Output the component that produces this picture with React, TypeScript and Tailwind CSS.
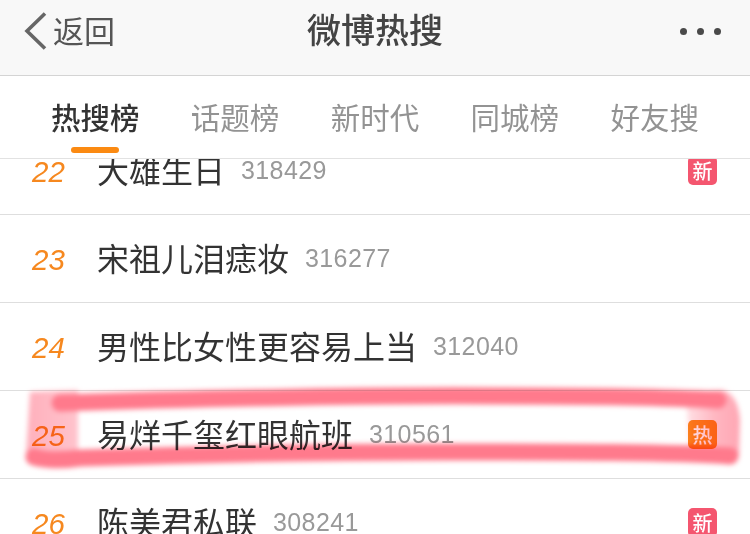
const tabs = ['热搜榜', '话题榜', '新时代', '同城榜', '好友搜'];

const rows = [
  { rank: 22, title: '大雄生日', count: '318429', badge: '新' },
  { rank: 23, title: '宋祖儿泪痣妆', count: '316277' },
  { rank: 24, title: '男性比女性更容易上当', count: '312040' },
  { rank: 25, title: '易烊千玺红眼航班', count: '310561', badge: '热' },
  { rank: 26, title: '陈美君私联', count: '308241', badge: '新' },
];

function Badge({ label }: { label: string }) {
  const color = label === '热' ? 'bg-[#fb8a1e]' : 'bg-[#f4566f]';
  return (
    <span className={`flex h-[29px] w-[29px] items-center justify-center rounded-[5px] text-[20px] font-medium leading-none text-white ${color}`}>
      {label}
    </span>
  );
}

export default function App() {
  return (
    <div
      className="relative flex h-[534px] w-[750px] flex-col overflow-hidden bg-white"
      style={{ fontFamily: '"Noto Sans CJK SC", "Liberation Sans", sans-serif' }}
    >
      <header className="relative z-10 grid h-[76px] shrink-0 grid-cols-[1fr_auto_1fr] items-center border-b border-[#d4d4d4] bg-[#f8f8f8] pb-[13px] pl-[24px] pr-[29px]">
        <div className="flex items-center text-[#555]">
          <svg width="23" height="38" viewBox="0 0 23 38" fill="none" className="shrink-0">
            <path d="M21 1.5 L3 19 L21 36.5" stroke="#666" strokeWidth="3.6" />
          </svg>
          <span className="-mt-[4px] ml-[6px] text-[31px] leading-none">返回</span>
        </div>
        <h1 className="-mt-[4px] ml-[5px] text-[34px] font-medium leading-none text-[#444]">微博热搜</h1>
        <div className="flex justify-end gap-[10px]">
          <span className="h-[7px] w-[7px] rounded-full bg-[#4a4a4a]" />
          <span className="h-[7px] w-[7px] rounded-full bg-[#4a4a4a]" />
          <span className="h-[7px] w-[7px] rounded-full bg-[#4a4a4a]" />
        </div>
      </header>

      <nav className="relative z-10 flex h-[83px] shrink-0 items-start justify-between border-b border-[#e2e2e2] bg-white px-[51px]">
        {tabs.map((tab, i) => (
          <div key={tab} className="relative flex h-[82px] flex-col items-center pt-[22px]">
            <span className={`text-[29.5px] leading-[36px] ${i === 0 ? 'font-medium text-[#333]' : 'text-[#939393]'}`}>{tab}</span>
            {i === 0 && <span className="absolute bottom-[5px] h-[6px] w-[48px] rounded-full bg-[#fb8a12]" />}
          </div>
        ))}
      </nav>

      <div className="-mt-[32px] flex flex-col">
        {rows.map((row) => (
          <div key={row.rank} className="flex h-[88px] shrink-0 items-center border-b border-[#dedede] pl-[32px] pr-[33px]">
            <span className="mt-[3px] w-[65px] text-[29.5px] italic leading-none text-[#f6881f]" style={{ fontFamily: '"Liberation Sans", sans-serif' }}>
              {row.rank}
            </span>
            <span className="-mt-[4px] text-[32px] leading-none text-[#333]">{row.title}</span>
            <span className="ml-[16px] text-[25px] leading-none tracking-[0.4px] text-[#999]" style={{ fontFamily: '"Liberation Sans", sans-serif' }}>
              {row.count}
            </span>
            <span className="ml-auto">{row.badge && <Badge label={row.badge} />}</span>
          </div>
        ))}
      </div>

      {/* hand drawn marker around row 25 */}
      <svg className="pointer-events-none absolute left-0 top-0 z-20 mix-blend-multiply blur-[2.5px]" width="750" height="534" viewBox="0 0 750 534" fill="none">
        <defs>
          <linearGradient id="markRight" x1="685" y1="0" x2="740" y2="0" gradientUnits="userSpaceOnUse">
            <stop offset="0" stopColor="#ffe3e7" />
            <stop offset="0.55" stopColor="#ffb6c1" />
            <stop offset="1" stopColor="#ffa6b3" />
          </linearGradient>
          <linearGradient id="markLeft" x1="27" y1="0" x2="80" y2="0" gradientUnits="userSpaceOnUse">
            <stop offset="0" stopColor="#ffb0bc" />
            <stop offset="1" stopColor="#ffc4cd" />
          </linearGradient>
        </defs>
        <path d="M30 392 L78 390 L78 460 L26 456 Z" fill="url(#markLeft)" />
        <path d="M686 392 L722 390 Q738 394 740 420 L739 456 Q730 464 690 460 Z" fill="url(#markRight)" />
        <path d="M60 403 C200 398 400 395 500 396 C600 396 680 398 718 400" stroke="#ff7a8c" strokeWidth="17" strokeLinecap="round" />
        <path d="M34 457 Q50 462 80 458 C200 454 300 452 450 452 C560 452 680 452 730 456" stroke="#ff7a8c" strokeWidth="17" strokeLinecap="round" />
      </svg>
    </div>
  );
}
